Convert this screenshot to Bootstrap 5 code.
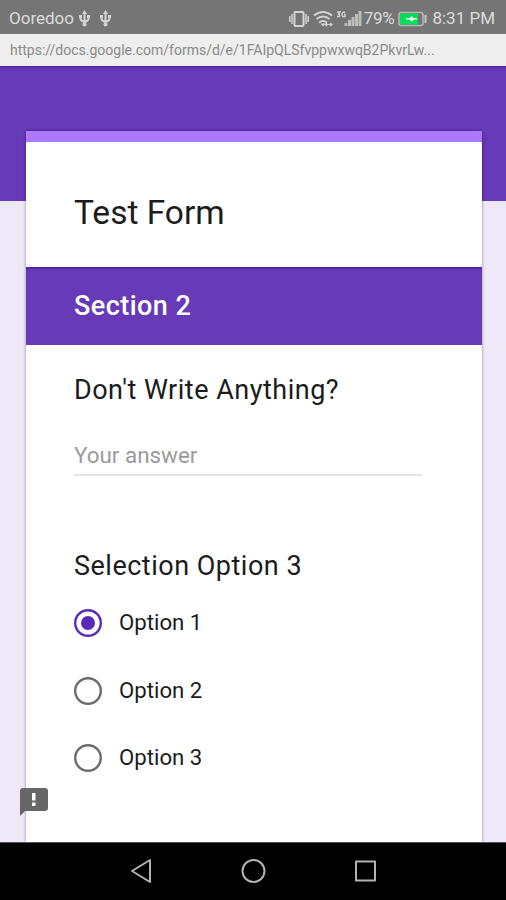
<!DOCTYPE html>
<html lang="en">
<head>
<meta charset="utf-8">
<meta name="viewport" content="width=device-width, initial-scale=1">
<title>Test Form</title>
<link href="https://cdn.jsdelivr.net/npm/bootstrap@5.3.0/dist/css/bootstrap.min.css" rel="stylesheet">
<style>
body{font-family:Roboto,"Liberation Sans",sans-serif;color:#1c1c1c;height:900px}
.status{height:34px;background:#757575;color:#dcdcdc;font-size:17px;padding:3px 11px 0 9px;line-height:31px}
.carrier{width:69px}
.clock{margin-left:5px}
.pct{font-size:17px;letter-spacing:-.3px}
.url{height:32px;background:#eee;color:#8a8a8a;font-size:14px;line-height:32px;padding-left:10px}
.page{background:linear-gradient(#4a1c9c 0,#6135ae 2px,#673ab7 5px,#673ab7 135px,#eee8f8 135px);padding:65px 24px 0 26px}
.sheet{border-top:11px solid #ac78ff;box-shadow:0 0 3px rgba(0,0,0,.42)}
.title{height:125px;padding:16px 48px 0;font-size:33.5px;line-height:110px;font-weight:400}
.section{height:78px;padding:0 48px;background:#673ab7;font-size:27px;font-weight:500;letter-spacing:.45px;line-height:75px;border-top:2px solid #5823ab}
.question{font-size:27px;line-height:36px;letter-spacing:.5px}
.body-pad{padding:27px 60px 0 48px}
.answer{height:41px;margin-top:27px;border:0;border-bottom:2px solid #e4e4e4;border-radius:0;padding:1px 0 0;font-size:22.4px;background:none}
.answer::placeholder{color:#9b9b9b}
.second{margin-top:72px}
.option{height:67.5px;gap:17px;font-size:22.2px}
.option svg{width:28px;height:28px}
.options{margin-top:5.4px}
.feedback{left:19px;bottom:26px}
.softkeys{height:58px;background:#000;border-top:1px solid #555;padding:0 128px}
</style>
<script src="https://cdn.jsdelivr.net/npm/bootstrap@5.3.0/dist/js/bootstrap.bundle.min.js"></script>
</head>
<body class="d-flex flex-column overflow-hidden">
<header class="status d-flex align-items-center flex-shrink-0 text-nowrap">
  <span class="carrier">Ooredoo</span>
  <svg width="13" height="18" viewBox="0 0 13 18" fill="none" stroke="#d4d4d4" stroke-width="2"><path d="M6.500 3v11M2.500 6v2.500q0 2.500 4 3.500 4-1 4-3.500V6"/><path d="M6.500 0 9 4H4zM1 5h3v3H1zM9 5h3v3H9z" fill="#d4d4d4" stroke="none"/><circle cx="6.500" cy="14.500" r="2" fill="#d4d4d4" stroke="none"/></svg>
  <svg class="ms-2" width="13" height="18" viewBox="0 0 13 18" fill="none" stroke="#d4d4d4" stroke-width="2"><path d="M6.500 3v11M2.500 6v2.500q0 2.500 4 3.500 4-1 4-3.500V6"/><path d="M6.500 0 9 4H4zM1 5h3v3H1zM9 5h3v3H9z" fill="#d4d4d4" stroke="none"/><circle cx="6.500" cy="14.500" r="2" fill="#d4d4d4" stroke="none"/></svg>
  <div class="d-flex align-items-center ms-auto">
    <svg width="76" height="20" viewBox="289 8 76 20" fill="none" stroke="#d4d4d4" stroke-width="1.5">
      <rect x="295.500" y="11" width="9" height="14" rx="1" stroke-width="2"/><path d="M293 13v10M290.800 15v6M307 13v10M309.200 15v6"/>
      <path d="M315 14.500q9-7 18 0M317.500 18q6.500-5 13 0M320 21.500q4-3 8 0" stroke-width="2"/><path d="M321.500 22.500h5l-2.500 3z" fill="#d4d4d4" stroke="none"/><path d="M326 23.500h7m-5-1.500-2 1.500 2 1.500m3-3 2 1.500-2 1.500" stroke-width="1.200"/>
      <path d="M338 11h3l-1.500 2q1.500.5 1 2.500h-2.500M346 11.500q-3-1-3 2t3 2v-2h-1" stroke-width="1.400"/>
      <path d="M345.500 25v-3h3v3zM349 25v-6h3v6zM352.500 25v-9h3v9zM356 25v-12h3v12zM359.500 25v-15h3v15z" fill="#bdbdbd" stroke="none"/>
    </svg>
    <span class="pct">79%</span>
    <svg class="ms-1" width="29" height="16" viewBox="0 0 29 16"><rect x="1" y="1.500" width="24" height="13" rx="2" fill="#757575" stroke="#b9b9b9" stroke-width="1.500"/><path d="M2 2.500h18v11H2z" fill="#00df59"/><path d="M26.500 4h2v8h-2z" fill="#c8c8c8"/><path d="M8 7h4l2-2 1 2h4v1.500h-3L13.500 11 12 8.500H8z" fill="#fff"/></svg>
    <span class="clock">8:31 PM</span>
  </div>
</header>
<div class="url flex-shrink-0 text-nowrap">https://docs.google.com/forms/d/e/1FAIpQLSfvppwxwqB2PkvrLw...</div>
<main class="page d-flex flex-column flex-grow-1 position-relative overflow-hidden">
  <form class="sheet flex-grow-1 bg-white">
    <h1 class="title m-0">Test Form</h1>
    <h2 class="section m-0 text-white">Section 2</h2>
    <div class="body-pad">
      <label class="question d-block" for="answer">Don't Write Anything?</label>
      <input class="answer form-control" id="answer" type="text" placeholder="Your answer">
      <div class="question second">Selection Option 3</div>
      <div class="options">
        <div class="option d-flex align-items-center"><svg viewBox="0 0 28 28" fill="none"><circle cx="14" cy="14" r="12.800" stroke="#5b2bb8" stroke-width="2.400"/><circle cx="14" cy="14" r="7" fill="#5b2bb8"/></svg><span>Option 1</span></div>
        <div class="option d-flex align-items-center"><svg viewBox="0 0 28 28" fill="none"><circle cx="14" cy="14" r="12.800" stroke="#6c6c6c" stroke-width="2.400"/></svg><span>Option 2</span></div>
        <div class="option d-flex align-items-center"><svg viewBox="0 0 28 28" fill="none"><circle cx="14" cy="14" r="12.800" stroke="#6c6c6c" stroke-width="2.400"/></svg><span>Option 3</span></div>
      </div>
    </div>
  </form>
  <svg class="feedback position-absolute" width="30" height="28" viewBox="0 0 30 28"><path d="M4 0h22q3 0 3 3v17q0 3-3 3H6l-5 5V3q0-3 3-3z" fill="#666"/><path d="M13 5h3.500v7.500H13zM13 14.500h3.500V18H13z" fill="#fff"/></svg>
</main>
<nav class="softkeys d-flex align-items-center justify-content-between flex-shrink-0">
  <svg width="26" height="28" viewBox="0 1 26 28" fill="none" stroke="#b2b2b2" stroke-width="2" stroke-linejoin="round"><path d="M22 3v22L4 14z"/></svg>
  <svg width="26" height="28" viewBox="0 1 26 28" fill="none" stroke="#b2b2b2" stroke-width="2"><circle cx="13.500" cy="14" r="11"/></svg>
  <svg width="26" height="28" viewBox="0 1 26 28" fill="none" stroke="#b2b2b2" stroke-width="2" stroke-linejoin="round"><path d="M4 4.500h19v19H4z"/></svg>
</nav>
</body>
</html>
